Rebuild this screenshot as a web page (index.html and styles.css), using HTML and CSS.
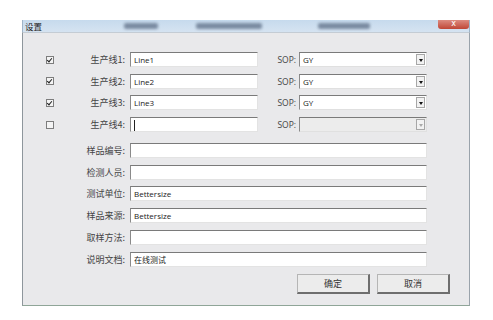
FILE: index.html
```html
<!DOCTYPE html>
<html>
<head>
  <meta charset="utf-8">
  <title>设置</title>
  <link rel="stylesheet" href="styles.css">
</head>
<body>
  <div class="window">
    <div class="titlebar">
      <span class="title">设置</span>
      <span class="ghost g1"></span>
      <span class="ghost g2"></span>
      <span class="ghost g3"></span>
      <span class="close">x</span>
    </div>

    <div class="client">
      <div class="form">
        <span class="check on"></span>
        <label class="lbl">生产线1:</label>
        <div class="field">Line1</div>
        <label class="sop">SOP:</label>
        <div class="combo"><span>GY</span><i class="arrow"></i></div>

        <span class="check on"></span>
        <label class="lbl">生产线2:</label>
        <div class="field">Line2</div>
        <label class="sop">SOP:</label>
        <div class="combo"><span>GY</span><i class="arrow"></i></div>

        <span class="check on"></span>
        <label class="lbl">生产线3:</label>
        <div class="field">Line3</div>
        <label class="sop">SOP:</label>
        <div class="combo"><span>GY</span><i class="arrow"></i></div>

        <span class="check"></span>
        <label class="lbl">生产线4:</label>
        <div class="field"><span class="caret"></span></div>
        <label class="sop">SOP:</label>
        <div class="combo off"><span></span><i class="arrow"></i></div>
      </div>

      <div class="form info">
        <label class="lbl">样品编号:</label>
        <div class="field wide"></div>

        <label class="lbl">检测人员:</label>
        <div class="field wide"></div>

        <label class="lbl">测试单位:</label>
        <div class="field wide">Bettersize</div>

        <label class="lbl">样品来源:</label>
        <div class="field wide">Bettersize</div>

        <label class="lbl">取样方法:</label>
        <div class="field wide"></div>

        <label class="lbl">说明文档:</label>
        <div class="field wide">在线测试</div>
      </div>

      <div class="buttons">
        <button class="btn">确定</button>
        <button class="btn">取消</button>
      </div>
    </div>
  </div>
</body>
</html>
```

FILE: styles.css
```css
body {
    margin: 0;
    background: #ffffff;
    font-family: "Open Sans", "Noto Sans CJK SC", sans-serif;
    font-size: 8px;
    color: #333;
}
.window {
    width: 448px;
    margin: 20px 0 0 22px;
}
.titlebar {
    height: 12px;
    display: flex;
    align-items: center;
    position: relative;
    background: linear-gradient(to bottom, #c6daed, #d5e3f1);
    border-left: 1px solid #9fb4c8;
    border-right: 1px solid #9fb4c8;
}
.title {
    font-family: "Noto Sans CJK SC", sans-serif;
    font-size: 8.5px;
    color: #1c1c1c;
    margin-left: 2px;
    line-height: 12px;
}
.ghost {
    height: 6px;
    background: #6c7d94;
    filter: blur(1.6px);
    opacity: 0.85;
    border-radius: 2px;
}
.g1 { width: 34px; margin-left: 82px; }
.g2 { width: 66px; margin-left: 38px; }
.g3 { width: 52px; margin-left: 56px; }
.close {
    position: absolute;
    right: 0;
    top: 0;
    width: 31px;
    height: 9px;
    background: linear-gradient(to bottom, #dc8b80, #c04636);
    border-radius: 0 0 3px 3px;
    color: #fff;
    font-size: 8px;
    line-height: 7px;
    text-align: center;
    font-family: "DejaVu Sans", sans-serif;
}
.client {
    background: #e9e9eb;
    border-left: 1px solid #8e969c;
    border-right: 1px solid #9aa3ab;
    border-top: 1px solid #c4ccd4;
    border-bottom: 1px solid #8fa598;
    height: 274px;
    padding: 19px 0 0 22px;
    box-sizing: border-box;
}
.form {
    display: grid;
    grid-template-columns: 10px 75px 128px 41px 128px;
    grid-auto-rows: 15px;
    row-gap: 6.7px;
    align-items: center;
}
.form.info {
    margin-top: 11px;
}
.check {
    grid-column: 1;
    width: 6px;
    height: 6px;
    border: 1px solid #7d7d7d;
    background: #f4f4f4;
    position: relative;
    margin-left: 1px;
}
.check.on::after {
    content: "";
    position: absolute;
    left: 1px;
    top: 0;
    width: 2px;
    height: 4px;
    border-right: 1.5px solid #222;
    border-bottom: 1.5px solid #222;
    transform: rotate(40deg);
}
.lbl {
    grid-column: 2;
    justify-self: end;
    margin-right: 5px;
    font-family: "Noto Sans CJK SC", sans-serif;
    font-size: 9px;
    color: #444;
}
.field {
    grid-column: 3;
    height: 15px;
    box-sizing: border-box;
    background: #fff;
    border-top: 1px solid #7a7a7a;
    border-left: 1px solid #8a8a8a;
    border-right: 1px solid #e3e3e3;
    border-bottom: 1px solid #e3e3e3;
    padding-left: 3px;
    line-height: 13px;
    color: #222;
    font-family: "Open Sans", "Noto Sans CJK SC", sans-serif;
}
.field.wide {
    grid-column: 3 / 6;
}
.caret {
    display: inline-block;
    width: 1px;
    height: 11px;
    background: #222;
    vertical-align: middle;
}
.sop {
    grid-column: 4;
    justify-self: end;
    margin-right: 3px;
    color: #444;
    font-size: 8.5px;
}
.combo {
    grid-column: 5;
    height: 15px;
    box-sizing: border-box;
    background: #fff;
    border-top: 1px solid #7a7a7a;
    border-left: 1px solid #8a8a8a;
    border-right: 1px solid #e0e0e0;
    border-bottom: 1px solid #e0e0e0;
    display: flex;
    align-items: center;
    justify-content: space-between;
    padding-left: 3px;
    color: #222;
}
.combo.off {
    background: #ececec;
}
.arrow {
    width: 9px;
    height: 11px;
    margin-right: 1px;
    box-sizing: border-box;
    border: 1px solid #a7a7a7;
    background: #f2f2f2;
    position: relative;
}
.arrow::after {
    content: "";
    position: absolute;
    left: 2px;
    top: 4px;
    border-left: 2px solid transparent;
    border-right: 2px solid transparent;
    border-top: 3px solid #111;
}
.combo.off .arrow::after {
    border-top-color: #aaa;
}
.buttons {
    display: flex;
    justify-content: flex-end;
    gap: 7px;
    width: 405px;
    margin-top: 7px;
}
.btn {
    width: 73px;
    height: 20px;
    background: #ececec;
    border-top: 1px solid #b5b5b5;
    border-left: 1px solid #b5b5b5;
    border-right: 2px solid #6e6e6e;
    border-bottom: 2px solid #6e6e6e;
    font-family: "Noto Sans CJK SC", sans-serif;
    font-size: 9px;
    color: #333;
    padding: 0;
}
```
